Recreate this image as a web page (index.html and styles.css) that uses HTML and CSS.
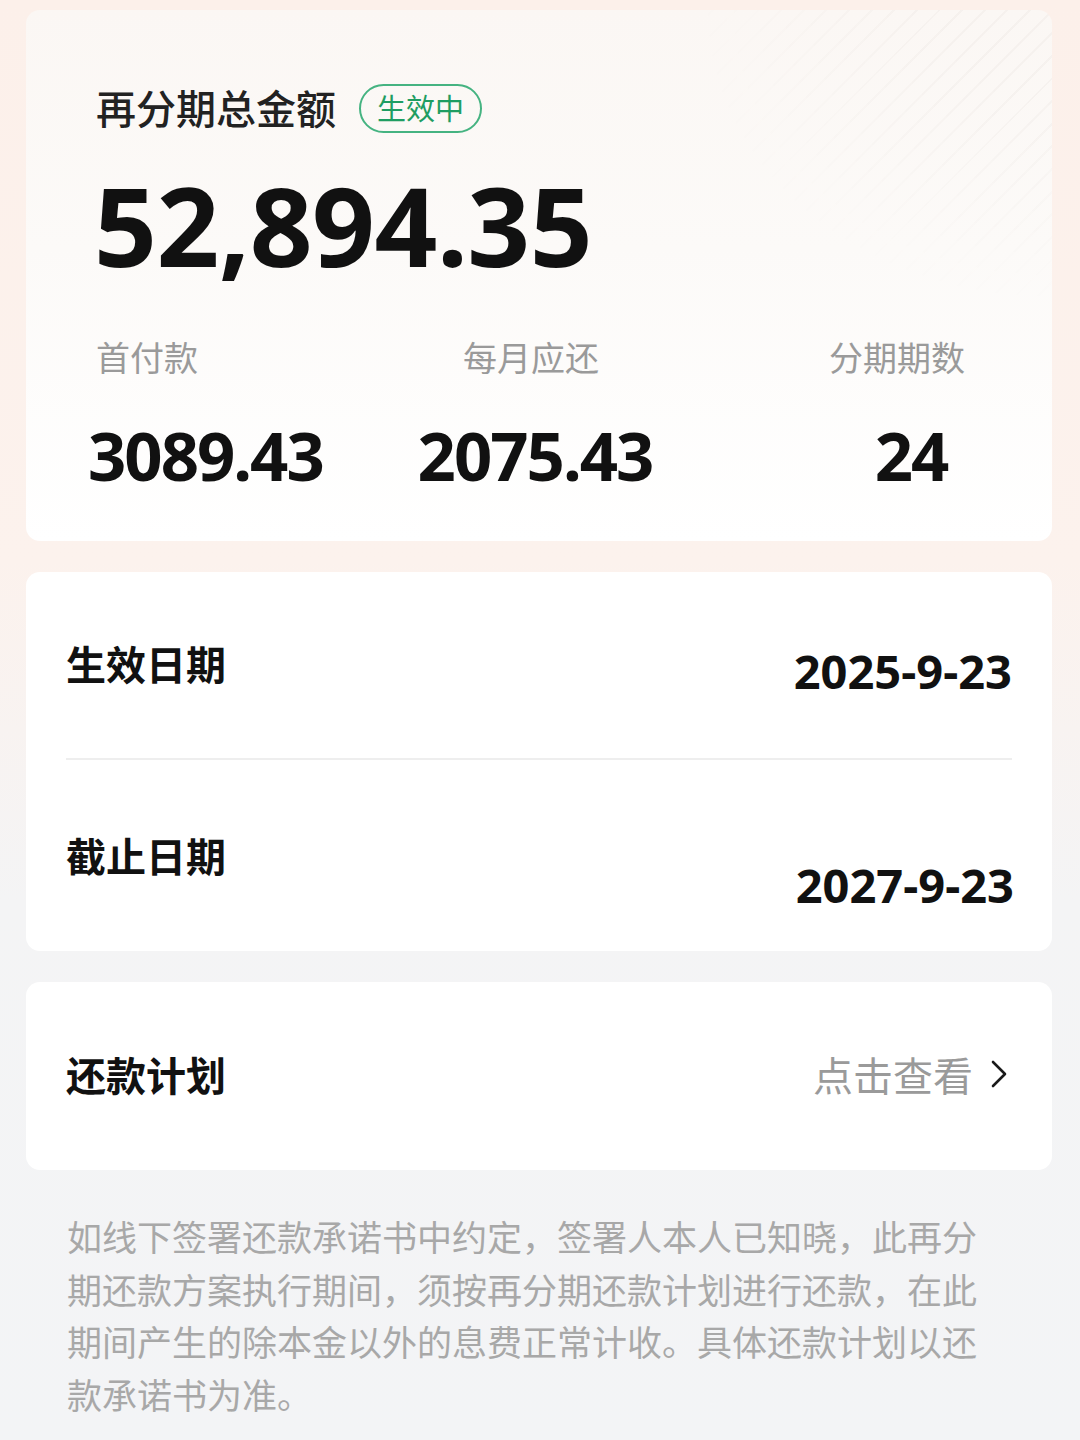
FILE: index.html
```html
<!DOCTYPE html>
<html lang="zh-CN">
<head>
<meta charset="utf-8">
<title>再分期</title>
<link rel="stylesheet" href="styles.css">
</head>
<body>
<div class="page">
  <section class="card summary">
    <div class="title-row">
      <span class="title">再分期总金额</span>
      <span class="badge">生效中</span>
    </div>
    <div class="total">52,894.35</div>
    <div class="stats">
      <div class="stat s1">
        <div class="stat-label">首付款</div>
        <div class="stat-value">3089.43</div>
      </div>
      <div class="stat s2">
        <div class="stat-label">每月应还</div>
        <div class="stat-value">2075.43</div>
      </div>
      <div class="stat s3">
        <div class="stat-label">分期期数</div>
        <div class="stat-value">24</div>
      </div>
    </div>
  </section>

  <section class="card dates">
    <div class="date-row r1">
      <span class="row-label">生效日期</span>
      <span class="date-value v1">2025-9-23</span>
    </div>
    <div class="divider"></div>
    <div class="date-row r2">
      <span class="row-label">截止日期</span>
      <span class="date-value v2">2027-9-23</span>
    </div>
  </section>

  <section class="card plan">
    <span class="row-label">还款计划</span>
    <span class="plan-link">
      <span class="plan-text">点击查看</span>
      <svg class="chev" width="18" height="30" viewBox="0 0 18 30"><polyline points="3,3 15,15 3,27" fill="none" stroke="#1a1a1a" stroke-width="2.6" stroke-linecap="round" stroke-linejoin="round"/></svg>
    </span>
  </section>

  <p class="note">如线下签署还款承诺书中约定，签署人本人已知晓，此再分期还款方案执行期间，须按再分期还款计划进行还款，在此期间产生的除本金以外的息费正常计收。具体还款计划以还款承诺书为准。</p>
</div>
</body>
</html>
```

FILE: styles.css
```css
* { box-sizing: border-box; }
html, body {
  margin: 0;
  padding: 0;
}
body {
  width: 1080px;
  min-height: 1440px;
  font-family: "Noto Sans", "Noto Sans CJK SC", sans-serif;
  background: linear-gradient(180deg, #fcf0ea 0px, #fcf2ed 560px, #f4f4f5 900px, #f3f4f6 1440px);
  color: #111;
}
.page {
  padding: 10px 28px 0 26px;
}
.card {
  border-radius: 14px;
  background: #fff;
}
.summary {
  position: relative;
  height: 531px;
  padding: 74px 2px 0 70px;
  background: linear-gradient(180deg, #fbf7f4 0%, #fcfaf8 45%, #ffffff 100%);
  overflow: hidden;
}
.summary::before {
  content: "";
  position: absolute;
  top: 0;
  right: 0;
  width: 360px;
  height: 300px;
  background: repeating-linear-gradient(135deg, rgba(255,255,255,0) 0 14px, rgba(120,100,90,0.04) 14px 16px);
  -webkit-mask-image: radial-gradient(ellipse at 100% 0%, #000 20%, rgba(0,0,0,0) 70%);
  mask-image: radial-gradient(ellipse at 100% 0%, #000 20%, rgba(0,0,0,0) 70%);
  pointer-events: none;
}
.title-row {
  position: relative;
  display: flex;
  align-items: center;
  height: 49px;
}
.title {
  font-size: 40px;
  font-weight: 500;
  color: #222;
  line-height: 40px;
}
.badge {
  margin-left: 23px;
  height: 49px;
  padding: 0 16px;
  border: 2px solid #45b381;
  border-radius: 25px;
  color: #1f9d62;
  font-size: 29px;
  line-height: 45px;
}
.total {
  position: relative;
  margin-top: 36px;
  font-size: 110px;
  font-weight: 700;
  line-height: 1;
  letter-spacing: -0.5px;
  color: #111;
  margin-left: -2px;
}
.stats {
  position: relative;
  display: grid;
  grid-template-columns: 289px 300px 320px;
  margin-top: 62px;
}
.stat {
  display: flex;
  flex-direction: column;
}
.s1 { align-items: flex-start; }
.s2 { align-items: center; }
.s3 { align-items: center; padding-left: 120px; }
.stat-label {
  font-size: 34px;
  line-height: 34px;
  color: #9a9a9a;
}
.s2 .stat-label { margin-left: -8px; }
.s3 .stat-label { margin-left: -16px; }
.stat-value {
  margin-top: 47px;
  font-size: 67px;
  font-weight: 700;
  line-height: 1;
  letter-spacing: -2px;
  color: #111;
}
.s1 .stat-value { margin-left: -8px; }
.s3 .stat-value { margin-left: 12px; }

.dates {
  margin-top: 31px;
  height: 379px;
  padding: 0 40px 0 40px;
}
.date-row {
  display: flex;
  justify-content: space-between;
  align-items: flex-start;
}
.r1 { height: 186px; padding-top: 73px; }
.r2 { height: 191px; padding-top: 77px; }
.row-label {
  font-size: 40px;
  font-weight: 700;
  line-height: 40px;
  color: #111;
}
.date-value {
  font-size: 47px;
  font-weight: 700;
  line-height: 1;
  color: #111;
}
.v1 { margin-top: 3px; }
.v2 { margin-top: 25px; margin-right: -2px; }
.divider {
  height: 2px;
  background: #eeeeee;
}

.plan {
  margin-top: 31px;
  height: 188px;
  padding: 0 44px 0 40px;
  display: flex;
  align-items: center;
  justify-content: space-between;
}
.plan-link {
  display: flex;
  align-items: center;
  gap: 17px;
}
.plan-text {
  font-size: 40px;
  line-height: 40px;
  color: #9a9a9a;
}
.chev {
  display: block;
  margin-top: -4px;
}

.note {
  margin: 42px 0 0 41px;
  width: 930px;
  font-size: 35px;
  line-height: 52.5px;
  color: #a8a8a8;
}
```
